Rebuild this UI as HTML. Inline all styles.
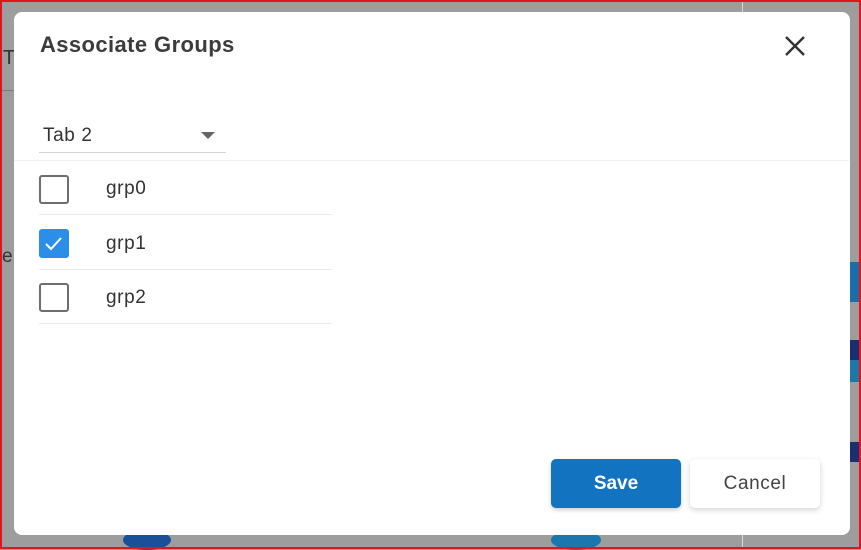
<!DOCTYPE html>
<html><head><style>
*{margin:0;padding:0;box-sizing:border-box}
body{width:861px;height:549px;overflow:hidden;background:#9d9d9d;position:relative;font-family:"Liberation Sans",sans-serif}
.frame{position:absolute;left:0;top:0;width:861px;height:549px;border:2px solid #e0161c;z-index:5;pointer-events:none}
.dlg{position:absolute;left:14px;top:12px;width:836px;height:523px;background:#fff;border-radius:8px}
.a{position:absolute}
.cb{position:absolute;left:39px;width:30px;height:29px;border:2px solid #6e6e6e;border-radius:3px;background:#fff}
.line{position:absolute;left:39px;width:293px;height:1px;background:#ebebeb}
.lbl{position:absolute;left:106px;font-size:19px;color:#333;letter-spacing:0.6px}
</style></head><body>
<div class="a" style="left:2px;top:90px;width:12px;height:1px;background:#7a7a7a"></div>
<div class="a" style="left:3px;top:47px;font-size:20px;color:#333">T</div>
<div class="a" style="left:2px;top:246px;font-size:19px;color:#333">e</div>
<div class="a" style="left:849px;top:262px;width:10px;height:40px;background:#1a6fa8"></div>
<div class="a" style="left:849px;top:340px;width:10px;height:20px;background:#1a2f70"></div>
<div class="a" style="left:849px;top:360px;width:10px;height:22px;background:#1b78a8"></div>
<div class="a" style="left:849px;top:442px;width:10px;height:20px;background:#1a2f70"></div>
<div class="a" style="left:123px;top:530px;width:48px;height:20px;border-radius:50%;background:#1a4f9a"></div>
<div class="a" style="left:551px;top:530px;width:50px;height:20px;border-radius:50%;background:#1a78ae"></div>
<div class="a" style="left:742px;top:0;width:1px;height:549px;background:#d8d8d8"></div>
<div class="dlg"></div>
<div class="a" style="left:40px;top:32px;font-size:22px;font-weight:bold;color:#3c3c3c;letter-spacing:0.4px">Associate Groups</div>
<svg class="a" style="left:784px;top:35px" width="22" height="22" viewBox="0 0 22 22"><path d="M2 2L20 20M20 2L2 20" stroke="#333" stroke-width="2.4"/></svg>
<div class="a" style="left:43px;top:125px;font-size:19px;color:#333;letter-spacing:0.6px">Tab 2</div>
<svg class="a" style="left:201px;top:132px" width="14" height="7"><path d="M0 0L14 0L7 7Z" fill="#666"/></svg>
<div class="a" style="left:39px;top:152px;width:187px;height:1px;background:#d5d5d5"></div>
<div class="a" style="left:14px;top:160px;width:835px;height:1px;background:#f0f0f0"></div>
<div class="cb" style="top:175px"></div>
<div class="lbl" style="top:178px">grp0</div>
<div class="line" style="top:214px"></div>
<div class="cb" style="top:229px;background:#2b8ee8;border-color:#2b8ee8"><svg width="26" height="25" style="position:absolute;left:0;top:0"><path d="M5 13L10 18L20 7" stroke="#fff" stroke-width="2" fill="none"/></svg></div>
<div class="lbl" style="top:233px">grp1</div>
<div class="line" style="top:269px"></div>
<div class="cb" style="top:283px"></div>
<div class="lbl" style="top:287px">grp2</div>
<div class="line" style="top:323px"></div>
<div class="a" style="left:551px;top:459px;width:130px;height:49px;background:#1273c1;border-radius:5px;color:#fff;font-size:19px;font-weight:bold;text-align:center;line-height:49px;box-shadow:0 2px 4px rgba(0,0,0,.2)">Save</div>
<div class="a" style="left:690px;top:459px;width:130px;height:49px;background:#fff;border-radius:5px;color:#444;font-size:19px;letter-spacing:0.6px;text-align:center;line-height:49px;box-shadow:0 2px 6px rgba(0,0,0,.18)">Cancel</div>
<div class="frame"></div>
</body></html>
